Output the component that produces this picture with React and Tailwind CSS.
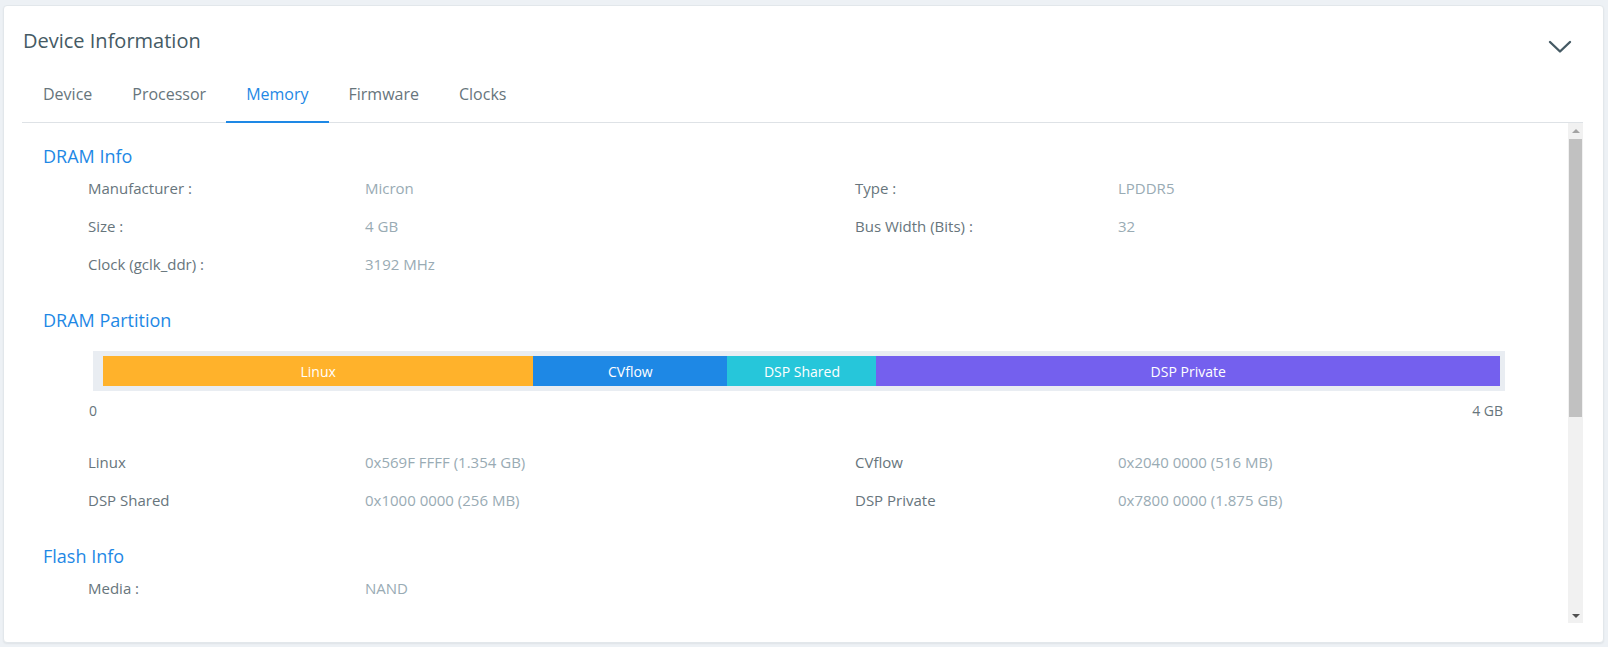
import { useState } from 'react'

const tabs = ['Device', 'Processor', 'Memory', 'Firmware', 'Clocks']

const dramInfo = [
  ['Manufacturer :', 'Micron', 'Type :', 'LPDDR5'],
  ['Size :', '4 GB', 'Bus Width (Bits) :', '32'],
  ['Clock (gclk_ddr) :', '3192 MHz', '', ''],
]

const partitions = [
  { name: 'Linux', width: '30.8%', color: 'bg-[#ffb22b]' },
  { name: 'CVflow', width: '13.9%', color: 'bg-[#1e88e5]' },
  { name: 'DSP Shared', width: '10.67%', color: 'bg-[#26c6da]' },
  { name: 'DSP Private', width: '44.63%', color: 'bg-[#7460ee]' },
]

const partitionRows = [
  ['Linux', '0x569F FFFF (1.354 GB)', 'CVflow', '0x2040 0000 (516 MB)'],
  ['DSP Shared', '0x1000 0000 (256 MB)', 'DSP Private', '0x7800 0000 (1.875 GB)'],
]

const flashInfo = [['Media :', 'NAND', '', '']]

function InfoGrid({ rows, className = '' }) {
  return (
    <div className={`grid grid-cols-[277px_490px_263px_1fr] auto-rows-[38px] items-center pl-[45px] text-[15px] ${className}`}>
      {rows.map((r, i) => (
        <div key={i} className="contents">
          <span className="text-[#67757c]">{r[0]}</span>
          <span className="text-[#99abb4]">{r[1]}</span>
          <span className="text-[#67757c]">{r[2]}</span>
          <span className="text-[#99abb4]">{r[3]}</span>
        </div>
      ))}
    </div>
  )
}

function SectionTitle({ children, className = '' }) {
  return <h4 className={`text-[18px] leading-[24px] text-[#1e88e5] ${className}`}>{children}</h4>
}

export default function App() {
  const [active, setActive] = useState('Memory')

  return (
    <div className="min-h-screen bg-[#edf1f5] pt-[5px] pl-[3px] font-['Open_Sans','Noto_Sans',sans-serif]">
      <div className="w-[1601px] h-[638px] bg-white border border-[#e2e7eb] rounded-[4px] shadow-[0_1px_2px_rgba(0,0,0,0.06)] pl-[19px] pr-[20px] pb-[19px] flex flex-col">
        {/* header */}
        <div className="flex items-start justify-between pt-[22px]">
          <h3 className="text-[20px] leading-[26px] text-[#455a64]">Device Information</h3>
          <svg width="24" height="14" viewBox="0 0 24 14" className="mt-[12px] mr-[11px]" fill="none">
            <path d="M2 2 L12 11.5 L22 2" stroke="#455a64" strokeWidth="2.4" strokeLinecap="round" strokeLinejoin="round" />
          </svg>
        </div>

        {/* tabs */}
        <div className="flex mt-[12px] -ml-px border-b border-[#dee2e6]">
          {tabs.map((t, i) => (
            <button
              key={t}
              onClick={() => setActive(t)}
              className={
                (i === 0 ? 'ml-[1px] ' : '') +
                (t === active
                  ? 'px-5 pt-4 pb-[15px] -mb-px border-b-2 border-[#1e88e5] text-[16px] leading-[24px] text-[#1e88e5]'
                  : 'px-5 pt-4 pb-4 text-[16px] leading-[24px] text-[#67757c]')
              }
            >
              {t}
            </button>
          ))}
        </div>

        {/* content + scrollbar */}
        <div className="flex h-[500px] -ml-px">
          <div className="flex-1 overflow-hidden pl-[21px] pr-5">
            <SectionTitle className="pt-[21px]">DRAM Info</SectionTitle>
            <InfoGrid rows={dramInfo} className="mt-[1px]" />

            <SectionTitle className="mt-[25px]">DRAM Partition</SectionTitle>
            <div className="ml-[50px] mt-[19px] w-[1412px] bg-[#e9edf2] pl-[10px] pr-[5px] py-[5px] flex">
              {partitions.map(p => (
                <div
                  key={p.name}
                  style={{ width: p.width }}
                  className={`${p.color} h-[30px] flex items-center justify-center text-white text-[14px]`}
                >
                  {p.name}
                </div>
              ))}
            </div>
            <div className="ml-[46px] w-[1414px] mt-[10px] flex justify-between text-[14px] leading-[20px] text-[#67757c]">
              <span>0</span>
              <span>4 GB</span>
            </div>
            <InfoGrid rows={partitionRows} className="mt-[22px]" />

            <SectionTitle className="mt-[25px]">Flash Info</SectionTitle>
            <InfoGrid rows={flashInfo} className="mt-[1px]" />
          </div>

          {/* scrollbar */}
          <div className="w-[15px] bg-[#f1f1f1] flex flex-col">
            <div className="h-[15px] flex items-center justify-center">
              <div className="w-0 h-0 border-x-[4px] border-x-transparent border-b-[4px] border-b-[#a3a3a3]" />
            </div>
            <div className="mx-[1px] mt-px h-[278px] bg-[#c1c1c1]" />
            <div className="flex-1" />
            <div className="h-[15px] flex items-center justify-center">
              <div className="w-0 h-0 border-x-[4px] border-x-transparent border-t-[4px] border-t-[#505050]" />
            </div>
          </div>
        </div>
      </div>
    </div>
  )
}
